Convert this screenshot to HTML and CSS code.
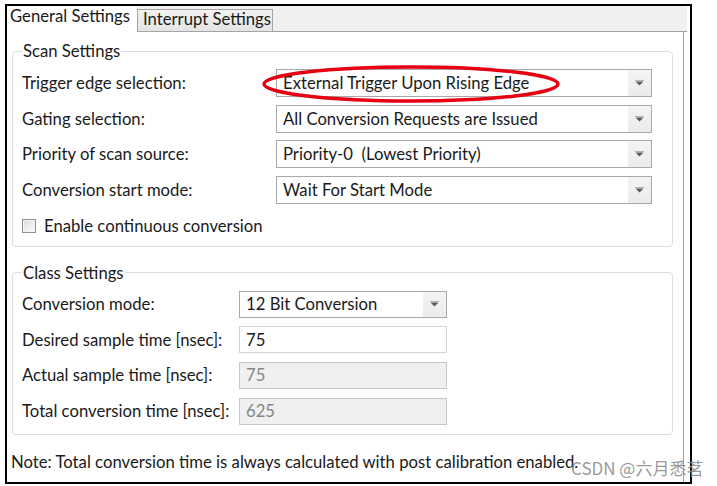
FILE: index.html
```html
<!DOCTYPE html>
<html>
<head>
<meta charset="utf-8">
<link rel="stylesheet" href="styles.css">
</head>
<body>
<div class="frame">
  <div class="tabs">
    <div class="tab active">General Settings</div>
    <div class="tab inactive">Interrupt Settings</div>
    <div class="tab-fill"></div>
  </div>
  <div class="panel">
    <fieldset class="group scan">
      <legend>Scan Settings</legend>
      <div class="grid scan-grid">
        <span class="lbl">Trigger edge selection:</span>
        <div class="combo"><span class="val">External Trigger Upon Rising Edge</span><span class="btn"><svg width="9" height="6" viewBox="0 0 9 6"><path d="M0 0h9v1H0z" fill="#b5b5b5"/><path d="M0.5 1.5h8L4.5 5.5z" fill="#5a5a5a"/></svg></span></div>
        <span class="lbl">Gating selection:</span>
        <div class="combo"><span class="val">All Conversion Requests are Issued</span><span class="btn"><svg width="9" height="6" viewBox="0 0 9 6"><path d="M0 0h9v1H0z" fill="#b5b5b5"/><path d="M0.5 1.5h8L4.5 5.5z" fill="#5a5a5a"/></svg></span></div>
        <span class="lbl">Priority of scan source:</span>
        <div class="combo"><span class="val">Priority-0&nbsp;&nbsp;(Lowest Priority)</span><span class="btn"><svg width="9" height="6" viewBox="0 0 9 6"><path d="M0 0h9v1H0z" fill="#b5b5b5"/><path d="M0.5 1.5h8L4.5 5.5z" fill="#5a5a5a"/></svg></span></div>
        <span class="lbl">Conversion start mode:</span>
        <div class="combo"><span class="val">Wait For Start Mode</span><span class="btn"><svg width="9" height="6" viewBox="0 0 9 6"><path d="M0 0h9v1H0z" fill="#b5b5b5"/><path d="M0.5 1.5h8L4.5 5.5z" fill="#5a5a5a"/></svg></span></div>
      </div>
      <div class="check-row"><span class="checkbox"></span><span class="lbl">Enable continuous conversion</span></div>
    </fieldset>

    <fieldset class="group cls">
      <legend>Class Settings</legend>
      <div class="grid class-grid">
        <span class="lbl">Conversion mode:</span>
        <div class="combo"><span class="val">12 Bit Conversion</span><span class="btn"><svg width="9" height="6" viewBox="0 0 9 6"><path d="M0 0h9v1H0z" fill="#b5b5b5"/><path d="M0.5 1.5h8L4.5 5.5z" fill="#5a5a5a"/></svg></span></div>
        <span class="lbl">Desired sample time [nsec]:</span>
        <div class="textbox">75</div>
        <span class="lbl">Actual sample time [nsec]:</span>
        <div class="textbox disabled">75</div>
        <span class="lbl">Total conversion time [nsec]:</span>
        <div class="textbox disabled">625</div>
      </div>
    </fieldset>

    <p class="note">Note: Total conversion time is always calculated with post calibration enabled.</p>

    <svg class="mark" width="310" height="44" viewBox="0 0 310 44"><ellipse cx="152" cy="22" rx="147" ry="17" fill="none" stroke="#e60012" stroke-width="3.5"/></svg>
  </div>
</div>
<div class="watermark">CSDN @六月悉茗</div>
</body>
</html>
```

FILE: styles.css
```css
html, body {
  margin: 0;
  padding: 0;
  background: #ffffff;
}

body {
  font-family: "Lato", "Liberation Sans", sans-serif;
  font-size: 16.7px;
  color: #1a1a1a;
  position: relative;
  width: 717px;
  height: 486px;
  overflow: hidden;
}

.frame {
  box-sizing: border-box;
  margin: 4px 0 0 5px;
  width: 687px;
  height: 480px;
  border: 2px solid #000;
  display: flex;
  flex-direction: column;
}

.tabs {
  display: flex;
  align-items: flex-end;
  height: 26px;
  background: #f0f0f0;
  margin-right: 3px;
  flex: none;
}

.tab {
  box-sizing: border-box;
  line-height: 18px;
  white-space: nowrap;
}

.tab.active {
  width: 130px;
  height: 26px;
  padding: 1px 3px 0;
  background: #fff;
  line-height: 18px;
}

.tab.inactive {
  width: 136px;
  height: 23px;
  padding: 0 5px;
  border: 1px solid #a5a5a5;
  background: linear-gradient(#f2f2f2, #e4e4e4);
}

.tab-fill {
  flex: 1;
  height: 1px;
  background: #a0a0a0;
}

.panel {
  position: relative;
  flex: 1;
  background: #fff;
  border-right: 1px solid #a0a0a0;
  margin-right: 6px;
  padding-top: 10px;
}

.group {
  box-sizing: border-box;
  width: 661px;
  margin: 0 0 0 5px;
  padding: 9px 9px 6px 9px;
  border: 1px solid #d5dfe5;
  border-radius: 4px;
  min-width: 0;
}

.group.cls {
  margin-top: 17px;
  padding-bottom: 9px;
}

.group legend {
  padding: 0 1px;
  line-height: 18px;
}

.grid {
  display: grid;
  align-items: center;
}

.scan-grid {
  grid-template-columns: 254px 376px;
  grid-auto-rows: 28px;
  row-gap: 7.67px;
}

.class-grid {
  grid-template-columns: 217px 208px;
  grid-auto-rows: 27px;
  row-gap: 8.67px;
}

.lbl {
  line-height: 18px;
  white-space: nowrap;
}

.combo {
  box-sizing: border-box;
  height: 100%;
  border: 1px solid #a9a9a9;
  background: #fff;
  display: flex;
  align-items: center;
}

.combo .val {
  flex: 1;
  padding-left: 6px;
  white-space: nowrap;
}

.combo .btn {
  width: 23px;
  height: 100%;
  background: linear-gradient(#f4f4f4, #ebebeb);
  display: flex;
  align-items: center;
  justify-content: center;
}

.textbox {
  box-sizing: border-box;
  height: 100%;
  border: 1px solid #d3d3d3;
  background: #fff;
  padding-left: 6px;
  display: flex;
  align-items: center;
}

.textbox.disabled {
  background: #f0f0f0;
  border-color: #c8c8c8;
  color: #858585;
}

.check-row {
  display: flex;
  align-items: center;
  gap: 8px;
  height: 28px;
  margin-top: 7.67px;
}

.checkbox {
  box-sizing: border-box;
  width: 14px;
  height: 14px;
  border: 1px solid #8e8f8f;
  background: linear-gradient(135deg, #dcdcdc, #fbfbfb);
  box-shadow: inset 0 0 0 1px #f4f4f4;
}

.note {
  margin: 18px 0 0 4px;
  line-height: 18px;
  white-space: nowrap;
}

.mark {
  position: absolute;
  left: 252px;
  top: 30px;
}

.watermark {
  position: absolute;
  left: 571px;
  top: 457px;
  font-family: "Noto Sans CJK SC", "Noto Sans", sans-serif;
  font-size: 17px;
  line-height: 22px;
  color: rgba(140, 140, 140, 0.9);
  white-space: nowrap;
}
```
